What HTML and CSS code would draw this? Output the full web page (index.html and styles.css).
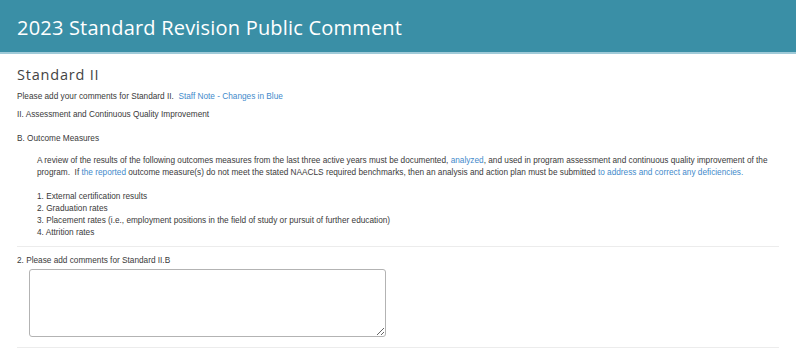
FILE: index.html
```html
<!DOCTYPE html>
<html>
<head>
    <meta charset="UTF-8">
    <title>2023 Standard Revision Public Comment</title>
    <!-- Survey page styling -->
    <link rel="stylesheet" href="styles.css">
</head>
<body>
<div class="survey-header">
    <h1 class="survey-title">2023 Standard Revision Public Comment</h1>
</div>
<div class="survey-body">
    <h3 class="page-title">Standard II</h3>
    <p class="intro">Please add your comments for Standard II.&nbsp; <span class="blue">Staff Note - Changes in Blue</span></p>
    <p class="section">II. Assessment and Continuous Quality Improvement</p>
    <p class="subsection">B. Outcome Measures</p>
    <div class="standard-text">
        <p class="paragraph">A review of the results of the following outcomes measures from the last three active years must be documented, <span class="blue">analyzed</span>, and used in program assessment and continuous quality improvement of the program.&nbsp; If <span class="blue">the reported</span> outcome measure(s) do not meet the stated NAACLS required benchmarks, then an analysis and action plan must be submitted <span class="blue">to address and correct any deficiencies.</span></p>
        <div class="measures">
            <div>1. External certification results</div>
            <div>2. Graduation rates</div>
            <div>3. Placement rates (i.e., employment positions in the field of study or pursuit of further education)</div>
            <div>4. Attrition rates</div>
        </div>
    </div>
    <!-- Question 2 -->
    <div class="question">
        <label for="q2" class="question-label">2. Please add comments for Standard II.B</label>
        <textarea id="q2" class="question-input"></textarea>
    </div>
</div>
</body>
</html>
```

FILE: styles.css
```css
/* Body styling */
body {
    font-family: "Liberation Sans", Arial, sans-serif;
    font-size: 8.26px;
    line-height: 11.8px;
    color: #3a3a3a;
    background-color: #fff;
    margin: 0;
    padding: 0;
}

p {
    margin: 0;
}

/* Header bar */
.survey-header {
    height: 52px;
    background-color: #3a8fa6;
    border-bottom: 2px solid #9fcad8;
    display: flex;
    align-items: center;
    padding: 0 17px;
}

.survey-title {
    margin: 0;
    color: #fff;
    font-family: "Open Sans", sans-serif;
    font-weight: 400;
    font-size: 20px;
    letter-spacing: 0.2px;
    line-height: 26px;
    padding-top: 3px;
}

/* Page content */
.survey-body {
    padding: 0 17px;
}

.page-title {
    margin: 12px 0 0;
    font-family: "Open Sans", sans-serif;
    font-weight: 400;
    font-size: 14.5px;
    letter-spacing: 0.8px;
    line-height: 18px;
    color: #444;
}

.intro {
    margin-top: 6.6px;
}

.section {
    margin-top: 6.4px;
}

.subsection {
    margin-top: 12.2px;
}

.blue {
    color: #3f8acb;
}

/* Standard text block */
.standard-text {
    padding-left: 20px;
    padding-right: 2px;
    margin-top: 10px;
}

.paragraph {
    line-height: 12.2px;
}

.measures {
    margin-top: 12.3px;
}

/* Question block */
.question {
    border-top: 1px solid #ececec;
    border-bottom: 1px solid #ececec;
    margin-top: 7.2px;
    padding: 8.6px 0 9.5px;
}

.question-label {
    display: block;
}

.question-input {
    display: block;
    box-sizing: border-box;
    width: 357px;
    height: 68px;
    margin: 2px 0 0 12px;
    border: 1px solid #b3b3b3;
    border-radius: 3px;
    font-size: 12px;
}
```
